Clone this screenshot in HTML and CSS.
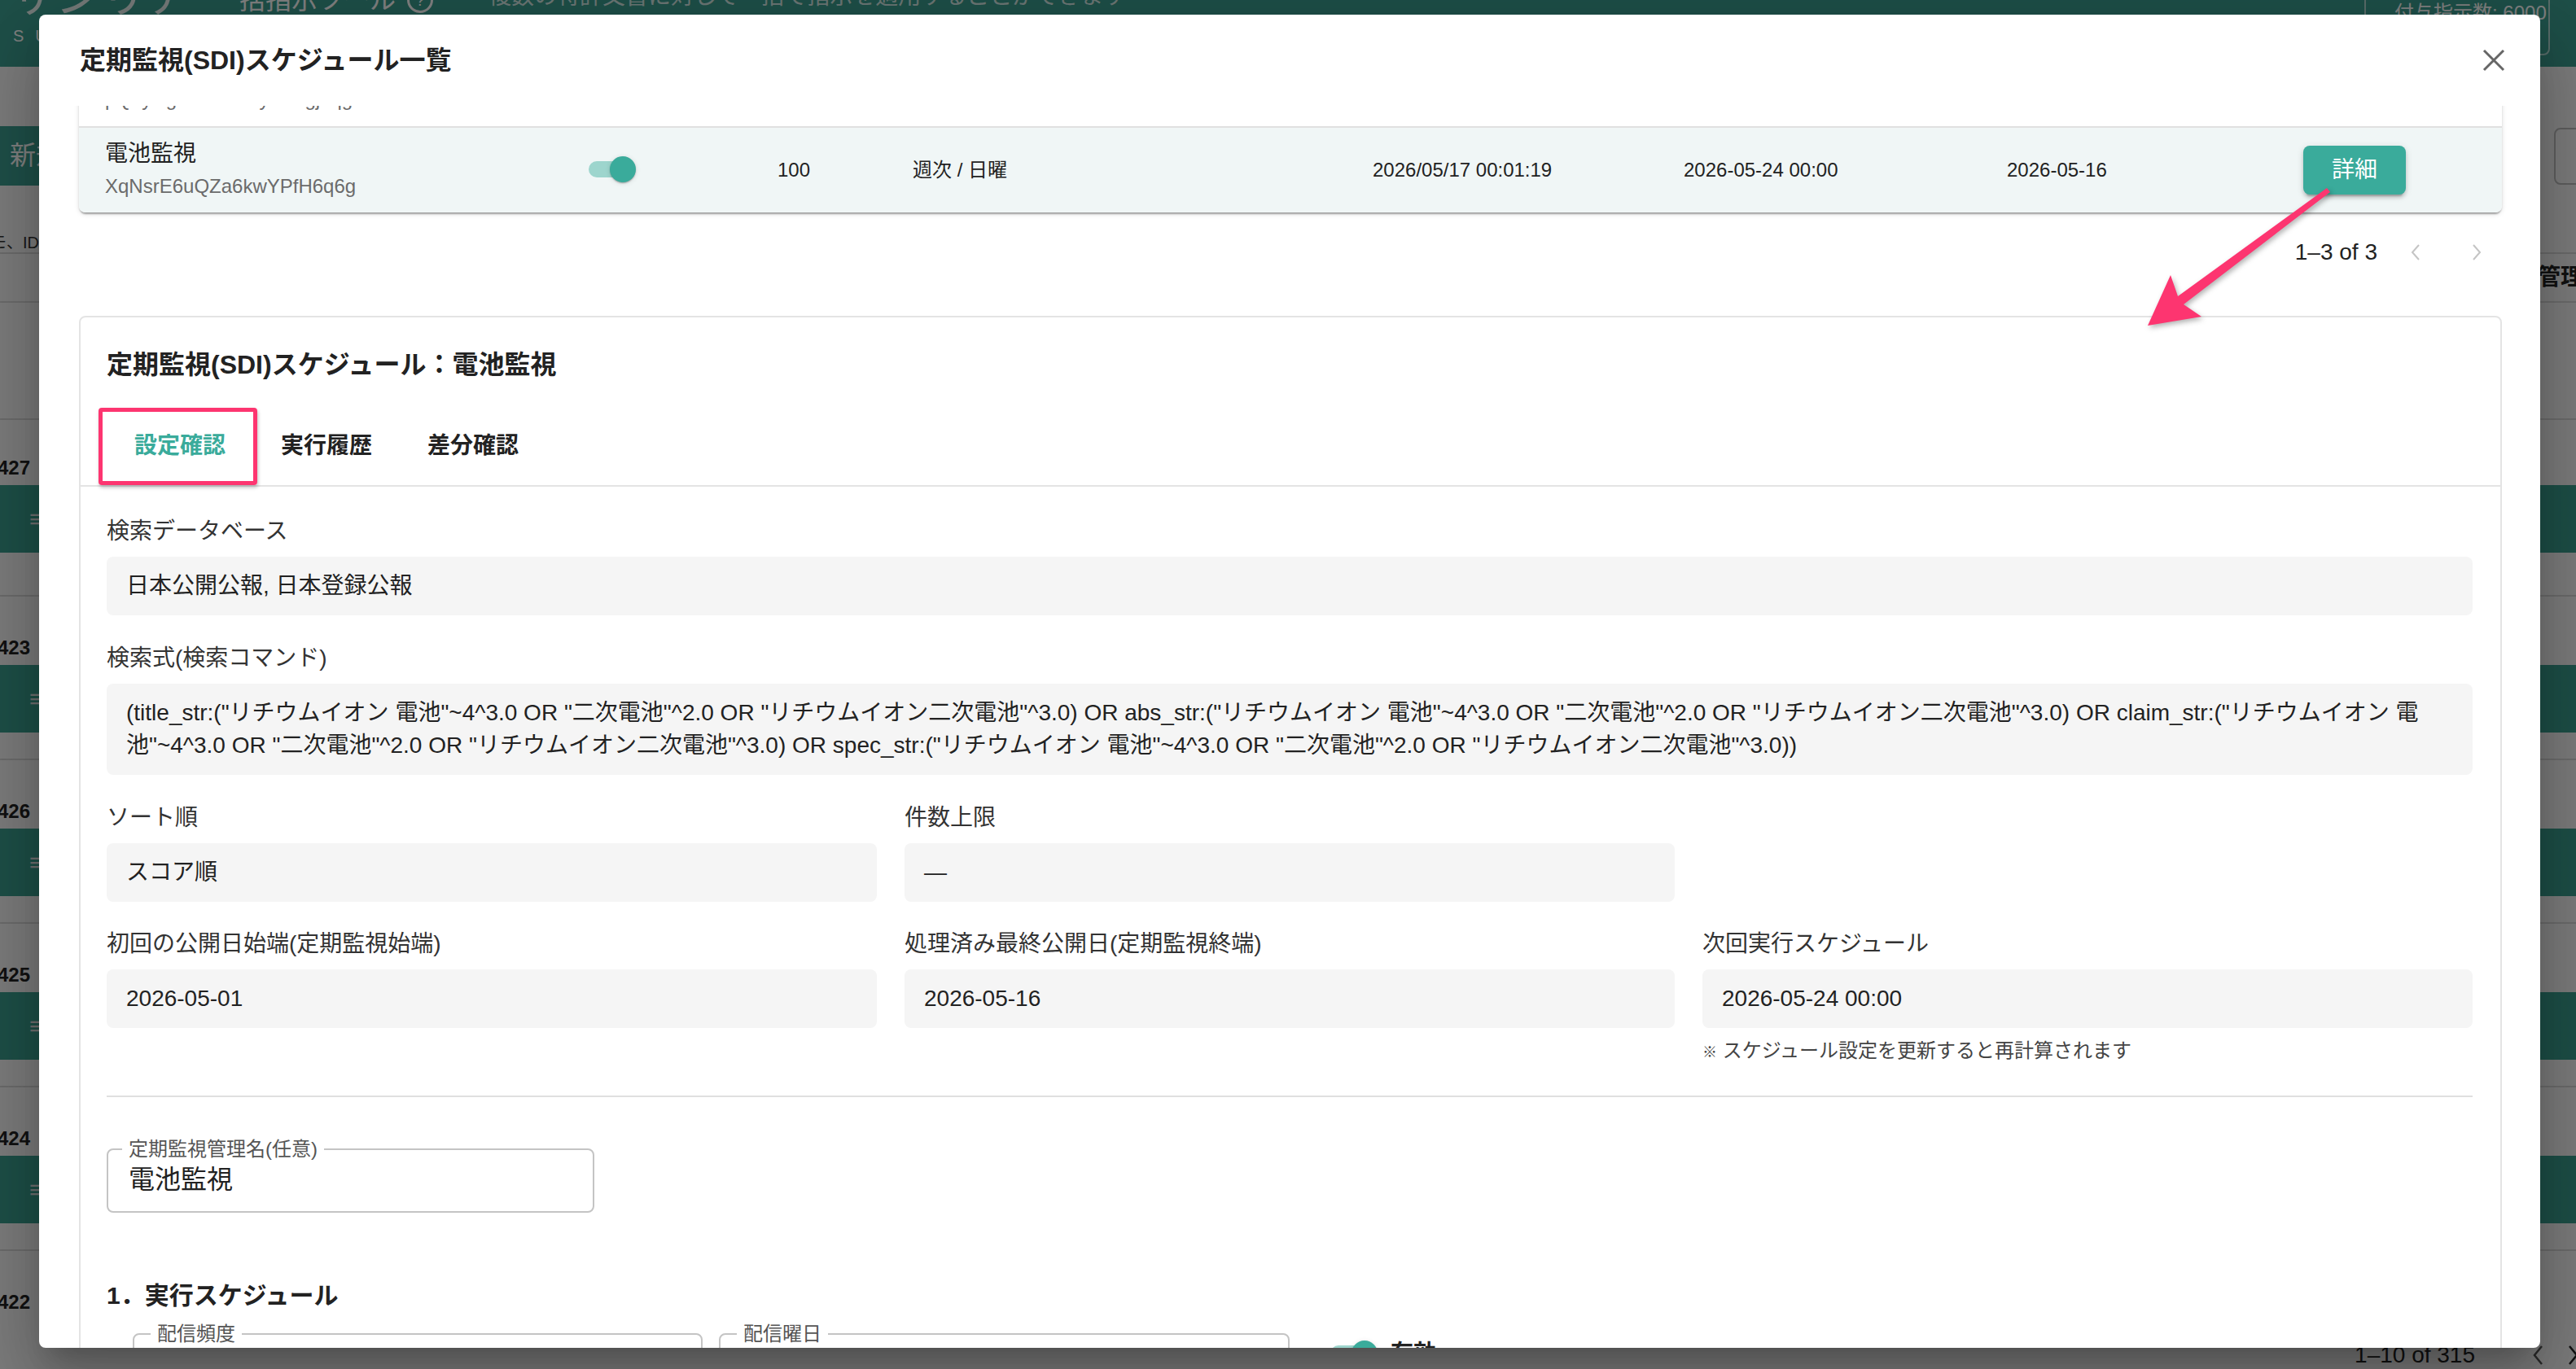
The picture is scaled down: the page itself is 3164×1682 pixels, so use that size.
FILE: index.html
```html
<!DOCTYPE html>
<html lang="ja">
<head>
<meta charset="utf-8">
<title>定期監視(SDI)スケジュール一覧</title>
<link rel="stylesheet" href="styles.css">
</head>
<body>
<div class="app">
  <header class="app-header">
    <div class="logo"><span class="logo-mark">サンリア</span><span class="logo-sub">SUNRIA</span></div>
    <div class="app-title">一括指示ツール<span class="help-icon">?</span></div>
    <div class="app-desc">複数の特許文書に対して一括で指示を適用することができます</div>
    <div class="quota">付与指示数: 6000</div>
  </header>
  <div class="app-toolbar">
    <div class="new-btn">新規作成</div>
    <div class="outline-btn">管理</div>
  </div>
  <div class="app-search"><span class="search-hint">メモ、IDで検索</span></div>
  <div class="bg-head"><span class="bg-head-right">管理者</span></div>
  <div class="bg-rows">
    <div class="bg-spacer"></div>
    <div class="bg-row first"><div class="bg-num">427</div><div class="bg-bar"><span class="bg-menu">≡</span></div></div>
    <div class="bg-row"><div class="bg-num">423</div><div class="bg-bar"><span class="bg-menu">≡</span></div></div>
    <div class="bg-row"><div class="bg-num">426</div><div class="bg-bar"><span class="bg-menu">≡</span></div></div>
    <div class="bg-row"><div class="bg-num">425</div><div class="bg-bar"><span class="bg-menu">≡</span></div></div>
    <div class="bg-row"><div class="bg-num">424</div><div class="bg-bar"><span class="bg-menu">≡</span></div></div>
    <div class="bg-row last"><div class="bg-num">422</div></div>
  </div>
  <div class="bg-pager">
    <span class="bg-pager-text">1–10 of 315</span>
    <svg class="bg-chev" viewBox="0 0 24 30"><polyline points="16,4 7,15 16,26" fill="none" stroke="#555" stroke-width="2.5"/></svg>
    <svg class="bg-chev" viewBox="0 0 24 30"><polyline points="8,4 17,15 8,26" fill="none" stroke="#222" stroke-width="2.5"/></svg>
  </div>
</div>

<div class="backdrop"></div>

<section class="dialog">
  <div class="dialog-head">
    <h2 class="dialog-title">定期監視(SDI)スケジュール一覧</h2>
    <button class="close-btn" type="button" aria-label="閉じる">
      <svg viewBox="0 0 28 28" width="28" height="28"><path d="M2 2 L26 26 M26 2 L2 26" stroke="#666" stroke-width="3" fill="none"/></svg>
    </button>
  </div>

  <div class="dialog-body">
    <div class="sched-table">
      <div class="sched-row prev">
        <div class="cell-name"><div class="name">全固体電池監視</div><div class="sid">pQ7yRg2kLmNs9yVbTgj4qg</div></div>
        <div class="cell-switch"><span class="switch"><span class="switch-track"></span><span class="switch-thumb"></span></span></div>
        <div>100</div>
        <div>週次 / 月曜</div>
        <div>2026/05/11 00:01:05</div>
        <div>2026-05-18 00:00</div>
        <div>2026-05-10</div>
        <div></div>
      </div>
      <div class="sched-row selected">
        <div class="cell-name"><div class="name">電池監視</div><div class="sid">XqNsrE6uQZa6kwYPfH6q6g</div></div>
        <div class="cell-switch"><span class="switch"><span class="switch-track"></span><span class="switch-thumb"></span></span></div>
        <div>100</div>
        <div>週次 / 日曜</div>
        <div>2026/05/17 00:01:19</div>
        <div>2026-05-24 00:00</div>
        <div>2026-05-16</div>
        <div><button class="detail-btn" type="button">詳細</button></div>
      </div>
    </div>

    <div class="pager">
      <span class="pager-text">1–3 of 3</span>
      <span class="pg-btn"><svg viewBox="0 0 14 22" width="14" height="22"><polyline points="11,2 3,11 11,20" fill="none" stroke="#c4c4c4" stroke-width="2"/></svg></span>
      <span class="pg-btn"><svg viewBox="0 0 14 22" width="14" height="22"><polyline points="3,2 11,11 3,20" fill="none" stroke="#c4c4c4" stroke-width="2"/></svg></span>
    </div>

    <div class="detail-card">
      <h3 class="detail-title">定期監視(SDI)スケジュール：電池監視</h3>
      <div class="tabs">
        <div class="tab active">設定確認<span class="tab-indicator"></span><span class="annot-box"></span></div>
        <div class="tab">実行履歴</div>
        <div class="tab">差分確認</div>
      </div>

      <div class="detail-body">
        <div class="fields">
          <div class="field">
            <div class="f-label">検索データベース</div>
            <div class="f-value">日本公開公報, 日本登録公報</div>
          </div>
          <div class="field">
            <div class="f-label">検索式(検索コマンド)</div>
            <div class="f-value">(title_str:("リチウムイオン 電池"~4^3.0 OR "二次電池"^2.0 OR "リチウムイオン二次電池"^3.0) OR abs_str:("リチウムイオン 電池"~4^3.0 OR "二次電池"^2.0 OR "リチウムイオン二次電池"^3.0) OR claim_str:("リチウムイオン 電池"~4^3.0 OR "二次電池"^2.0 OR "リチウムイオン二次電池"^3.0) OR spec_str:("リチウムイオン 電池"~4^3.0 OR "二次電池"^2.0 OR "リチウムイオン二次電池"^3.0))</div>
          </div>
          <div class="grid3">
            <div class="field">
              <div class="f-label">ソート順</div>
              <div class="f-value">スコア順</div>
            </div>
            <div class="field">
              <div class="f-label">件数上限</div>
              <div class="f-value">—</div>
            </div>
            <div></div>
            <div class="field">
              <div class="f-label">初回の公開日始端(定期監視始端)</div>
              <div class="f-value">2026-05-01</div>
            </div>
            <div class="field">
              <div class="f-label">処理済み最終公開日(定期監視終端)</div>
              <div class="f-value">2026-05-16</div>
            </div>
            <div class="field">
              <div class="f-label">次回実行スケジュール</div>
              <div class="f-value">2026-05-24 00:00</div>
              <div class="f-note"><span class="kome">※</span> スケジュール設定を更新すると再計算されます</div>
            </div>
          </div>
        </div>

        <div class="divider"></div>

        <fieldset class="outlined name-field">
          <legend>定期監視管理名(任意)</legend>
          <div class="outlined-value">電池監視</div>
        </fieldset>

        <h4 class="section-title">1．実行スケジュール</h4>

        <div class="sched-controls">
          <fieldset class="outlined select-field">
            <legend>配信頻度</legend>
            <div class="outlined-value">週次</div>
          </fieldset>
          <fieldset class="outlined select-field">
            <legend>配信曜日</legend>
            <div class="outlined-value">日曜</div>
          </fieldset>
          <div class="enable-switch">
            <span class="switch"><span class="switch-track"></span><span class="switch-thumb"></span></span>
            <span class="enable-label">有効</span>
          </div>
        </div>
      </div>
    </div>
  </div>
</section>

<svg class="annot-arrow" viewBox="0 0 3164 1682" width="3164" height="1682">
  <polygon points="2858,231 2675,364 2666,338 2638,400 2704,389 2682,374 2862,236" fill="#fd3570"/>
</svg>
</body>
</html>
```

FILE: styles.css
```css
* { box-sizing: border-box; margin: 0; padding: 0; }

html, body { width: 3164px; height: 1682px; overflow: hidden; }

body {
  position: relative;
  background: #f6f6f6;
  color: #222;
  font-family: "Liberation Sans", "Noto Sans CJK JP", sans-serif;
  font-size: 28px;
  line-height: 40px;
}

button { font: inherit; border: 0; background: none; cursor: pointer; }

/* ---------- background application ---------- */
.app { height: 1682px; display: flex; flex-direction: column; overflow: hidden; }

.app-header {
  flex: none;
  height: 82px;
  background: #3d9f90;
  color: #fff;
  display: flex;
  align-items: flex-start;
  overflow: hidden;
}
.logo { width: 262px; display: flex; flex-direction: column; margin-top: -32px; padding-left: 12px; }
.logo-mark { font-size: 56px; line-height: 56px; color: #e8f3f0; white-space: nowrap; }
.logo-sub { margin-top: 8px; font-size: 20px; line-height: 24px; letter-spacing: 14px; padding-left: 4px; }
.app-title { width: 338px; font-size: 32px; line-height: 32px; margin-top: -16px; display: flex; align-items: center; }
.help-icon {
  width: 32px; height: 32px; margin-left: 14px;
  border: 3px solid #fff; border-radius: 50%;
  font-size: 20px; line-height: 26px; text-align: center;
}
.app-desc { font-size: 28px; line-height: 28px; margin-top: -18px; color: rgba(255,255,255,.8); }
.quota {
  margin-left: auto; margin-right: 32px; margin-top: -10px;
  width: 228px; height: 78px;
  border: 2px solid rgba(255,255,255,.6); border-radius: 8px;
  padding: 8px 0 0 35px;
  font-size: 24px; line-height: 32px;
}

.app-toolbar { flex: none; height: 146px; padding-top: 73px; display: flex; justify-content: space-between; align-items: flex-start; }
.new-btn {
  width: 320px; height: 73px; background: #3d9f90; color: #fff;
  font-size: 32px; line-height: 73px; padding-left: 12px; border-radius: 0 8px 8px 0;
}
.outline-btn {
  width: 187px; height: 70px; margin-top: 2px; margin-right: -160px;
  border: 2px solid #bdbdbd; border-radius: 8px; padding-left: 24px;
  font-size: 28px; line-height: 66px; color: #555;
}

.app-search { flex: none; height: 82px; display: flex; align-items: flex-end; }
.search-hint { margin-left: -32px; font-size: 20px; line-height: 24px; color: #333; }

.bg-head {
  flex: none; height: 62px; border-top: 2px solid #d6d6d6; border-bottom: 2px solid #d6d6d6;
  display: flex; justify-content: flex-end; align-items: center;
}
.bg-head-right { margin-right: -37px; font-size: 28px; line-height: 40px; font-weight: 700; }

.bg-rows { flex: 1; overflow: hidden; display: flex; flex-direction: column; }
.bg-spacer { flex: none; height: 144px; border-bottom: 2px solid #d6d6d6; }
.bg-row { flex: none; height: 201px; border-bottom: 2px solid #d6d6d6; padding-top: 49px; }
.bg-row.first { height: 217px; padding-top: 45px; }
.bg-row.last { border-bottom: 0; }
.bg-num { margin-left: -3px; font-size: 24px; line-height: 28px; font-weight: 700; }
.bg-bar {
  margin-top: 7px; height: 83px; background: #3b9e8f;
  color: #e0e0e0; font-size: 30px; line-height: 83px; padding-left: 36px;
}
.bg-pager { flex: none; height: 34px; display: flex; justify-content: flex-end; align-items: center; }
.bg-pager-text { font-size: 28px; line-height: 34px; margin-right: 66px; }
.bg-chev { width: 24px; height: 30px; }
.bg-chev + .bg-chev { margin-left: 18px; margin-right: -8px; }

.backdrop { position: absolute; inset: 0; background: rgba(0,0,0,.5); }

/* ---------- dialog ---------- */
.dialog {
  position: absolute; left: 48px; top: 18px;
  width: 3072px; height: 1638px;
  background: #fff; border-radius: 8px; overflow: hidden;
  display: flex; flex-direction: column;
  box-shadow: 0 22px 30px -14px rgba(0,0,0,.2), 0 48px 76px 6px rgba(0,0,0,.14), 0 18px 92px 16px rgba(0,0,0,.12);
}
.dialog-head {
  flex: none; height: 112px;
  display: flex; align-items: center; justify-content: space-between;
  padding: 0 43px 0 50px;
}
.dialog-title { font-size: 32px; line-height: 40px; font-weight: 700; color: #222; }
.close-btn { width: 28px; height: 28px; display: flex; }

.dialog-body { flex: 1; overflow: hidden; padding: 0 47px 0 49px; }

/* schedule table */
.sched-table {
  margin-top: -81px; background: #fff; border-radius: 8px;
  box-shadow: 0 4px 2px -2px rgba(0,0,0,.2), 0 2px 2px 0 rgba(0,0,0,.14), 0 2px 6px 0 rgba(0,0,0,.12);
}
.sched-row {
  display: grid;
  grid-template-columns: 594px 232px 166px 565px 382px 397px 364px 126px;
  align-items: center;
  height: 106px; padding-left: 32px;
  font-size: 24px; line-height: 32px; color: #222;
  border-top: 2px solid #e0e0e0;
}
.sched-row.prev { border-top: 0; }
.sched-row.selected { background: #f0f6f6; border-radius: 0 0 8px 8px; }
.cell-name .name { font-size: 28px; line-height: 40px; }
.cell-name .sid { font-size: 24px; line-height: 40px; color: #6b6b6b; }

.switch { position: relative; display: inline-flex; align-items: center; width: 58px; height: 32px; }
.switch-track { width: 52px; height: 20px; border-radius: 10px; background: #9dd5cd; }
.switch-thumb {
  position: absolute; right: 0; top: 0; width: 32px; height: 32px; border-radius: 50%;
  background: #3aab9b;
  box-shadow: 0 2px 2px -1px rgba(0,0,0,.2), 0 1px 2px rgba(0,0,0,.14), 0 1px 6px rgba(0,0,0,.12);
}

.detail-btn {
  width: 126px; height: 60px; border-radius: 8px;
  background: #3aab9b; color: #fff; font-size: 28px; line-height: 60px;
  box-shadow: 0 6px 2px -4px rgba(0,0,0,.2), 0 4px 4px 0 rgba(0,0,0,.14), 0 2px 10px 0 rgba(0,0,0,.12);
}

/* pager */
.pager {
  height: 98px; display: flex; align-items: center; justify-content: flex-end;
  padding-right: 7px; font-size: 28px; line-height: 40px; color: #222;
}
.pager-text { margin-right: 23px; }
.pg-btn { width: 48px; height: 48px; display: flex; align-items: center; justify-content: center; }
.pg-btn + .pg-btn { margin-left: 27px; }

/* detail card */
.detail-card { margin-top: 29px; border: 2px solid #e4e4e4; border-radius: 8px; }
.detail-title { padding: 38px 32px 0; font-size: 32px; line-height: 40px; font-weight: 700; color: #222; }

.tabs { margin-top: 32px; display: flex; padding-left: 32px; border-bottom: 2px solid #e4e4e4; }
.tab {
  position: relative; width: 180px; height: 96px;
  display: flex; align-items: center; justify-content: center;
  font-size: 28px; line-height: 40px; font-weight: 700; color: #222;
}
.tab.active { color: #3aab9b; }
.tab-indicator { position: absolute; left: 0; right: 0; bottom: 0; height: 4px; background: #3aab9b; }
.annot-box {
  position: absolute; left: -10px; right: -5px; top: 1px; bottom: 0;
  border: 5px solid #fd3570; border-radius: 4px;
  box-shadow: 1px 3px 4px rgba(0,0,0,.25);
}

.detail-body { padding: 35px 34px 0 32px; }
.fields { display: flex; flex-direction: column; gap: 33px; }
.f-label { font-size: 28px; line-height: 40px; color: #333; margin-bottom: 11px; }
.f-value {
  background: #f5f5f5; border-radius: 8px; padding: 16px 24px;
  font-size: 28px; line-height: 40px; color: #222;
}
.grid3 { display: grid; grid-template-columns: repeat(3, 1fr); column-gap: 34px; row-gap: 32px; }
.f-note { margin-top: 12px; font-size: 24px; line-height: 32px; color: #444; }
.kome { font-size: 18px; }

.divider { margin-top: 37px; height: 2px; background: #e0e0e0; }

.outlined { border: 2px solid #c4c4c4; border-radius: 8px; padding: 0 25px 18px; }
.outlined legend { margin-left: -8px; padding: 0 8px; font-size: 24px; line-height: 32px; color: #555; }
.outlined-value { font-size: 32px; line-height: 42px; color: #222; }
.name-field { width: 599px; margin-top: 48px; }

.section-title { margin-top: 82px; font-size: 30px; line-height: 40px; font-weight: 700; color: #222; }

.sched-controls { margin-top: 11px; padding-left: 32px; display: flex; align-items: flex-start; }
.select-field { width: 700px; padding-left: 28px; }
.select-field + .select-field { margin-left: 20px; width: 701px; }
.enable-switch { margin-left: 50px; margin-top: 24px; display: flex; align-items: center; gap: 16px; }
.enable-label { font-size: 28px; line-height: 32px; font-weight: 700; }

/* annotation arrow */
.annot-arrow {
  position: absolute; left: 0; top: 0; pointer-events: none;
  filter: drop-shadow(2px 3px 3px rgba(0,0,0,.3));
}
```
